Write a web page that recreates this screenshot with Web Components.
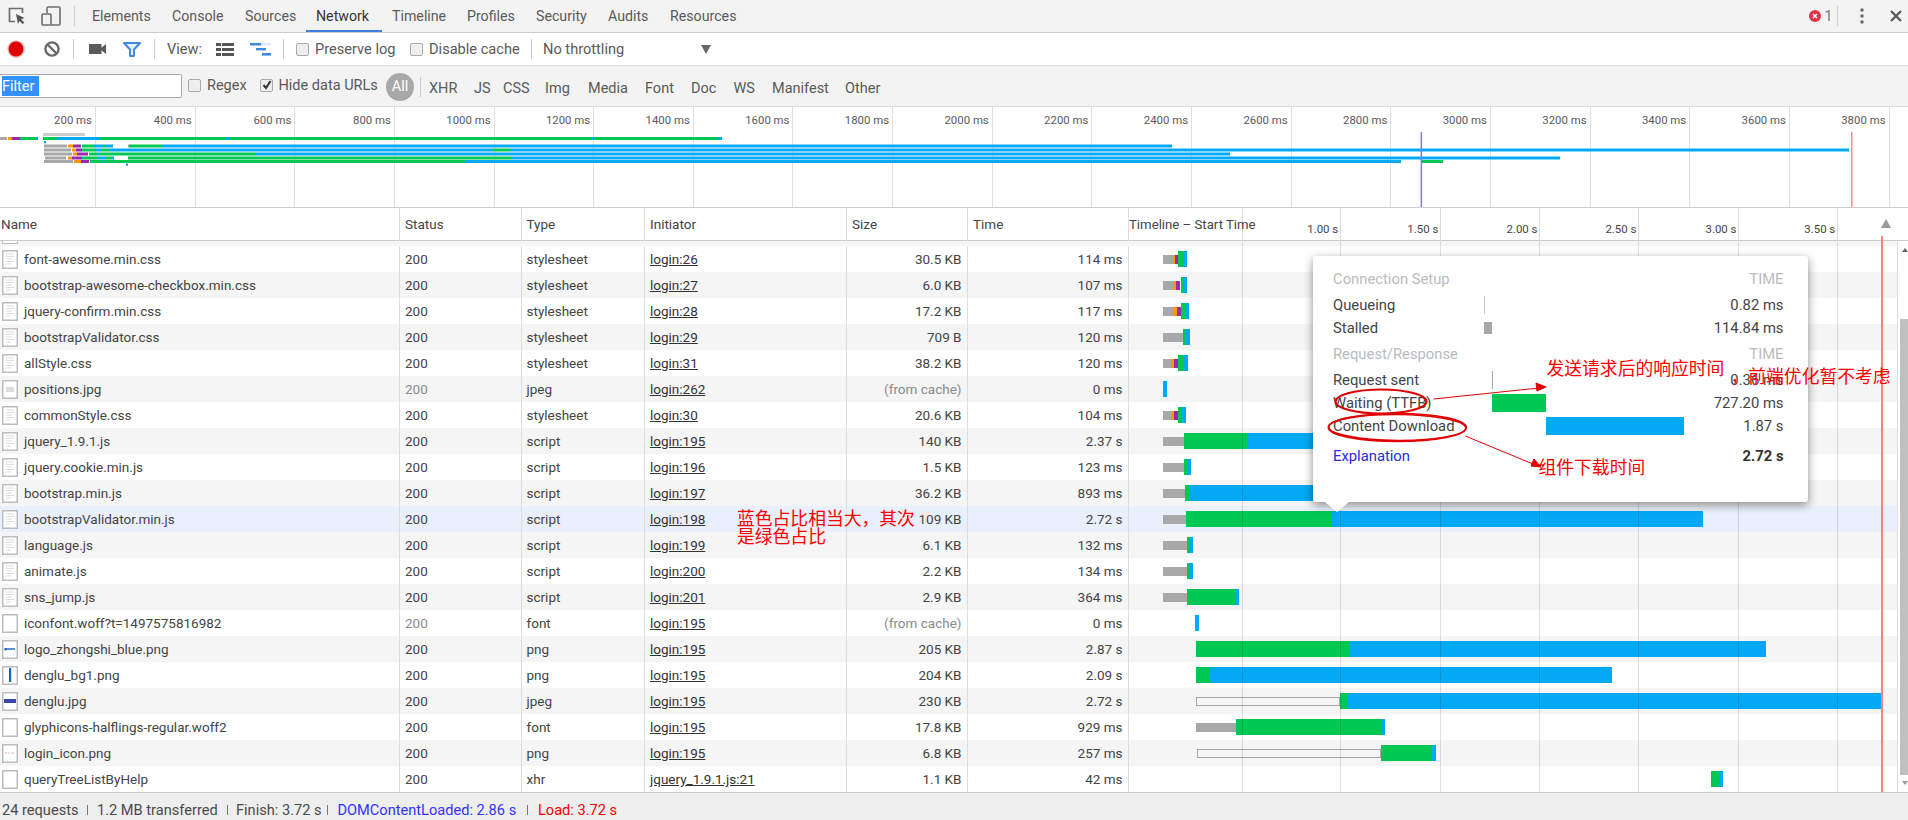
<!DOCTYPE html>
<html>
<head>
<meta charset="utf-8">
<title>Network</title>
<style>
  html, body { margin: 0; padding: 0; }
  body {
    position: relative;
    width: 1908px;
    height: 820px;
    overflow: hidden;
    background: #fff;
    color: #4a4a4a;
    font: 13.5px Roboto, "Noto Sans CJK SC", sans-serif;
  }
</style>
</head>
<body>
<dt-tabbar></dt-tabbar>
<net-toolbar></net-toolbar>
<net-filterbar></net-filterbar>
<net-overview></net-overview>
<net-table></net-table>
<net-status></net-status>
<timing-popup></timing-popup>
<red-notes></red-notes>

<script>
const GREEN = "#00c853";
const BLUE = "#03a9f4";
const GREY = "#a8a8a8";
const ORANGE = "#ff9800";
const PURPLE = "#9c27b0";

class DtTabbar extends HTMLElement {
  constructor() {
    super();
    this.attachShadow({ mode: "open" });
    const tabs = [
      ["Elements", 80], ["Console", 73], ["Sources", 71], ["Network", 76], ["Timeline", 75],
      ["Profiles", 69], ["Security", 72], ["Audits", 62], ["Resources", 90],
    ];
    this.shadowRoot.innerHTML = `
      <style>
        :host {
          display: flex;
          align-items: center;
          box-sizing: border-box;
          height: 33px;
          background: #f3f3f3;
          border-bottom: 1px solid #ccc;
          color: #5a5a5a;
          font-size: 14.2px;
        }
        svg { display: block; flex: none; }
        .sep { flex: none; width: 1px; height: 20px; background: #ccc; }
        .tab {
          box-sizing: border-box;
          flex: none;
          height: 32px;
          line-height: 33px;
          padding-left: 10px;
          white-space: nowrap;
        }
        .tab.on { color: #333; border-bottom: 2px solid #3f7fe0; }
        .right { margin-left: auto; display: flex; align-items: center; padding-right: 6px; }
        .count { margin-left: 4px; width: 11px; color: #777; }
      </style>
      <svg style="margin-left:8px" width="18" height="18" viewBox="0 0 18 18">
        <path d="M14.5 6V1.5H1.5v13H7" fill="none" stroke="#6e6e6e" stroke-width="1.7"/>
        <path d="M8 7l8.5 4-3.4 1.3 3.2 3.2-1.6 1.6-3.2-3.2L10 17z" fill="#555"/>
      </svg>
      <svg style="margin-left:15px" width="20" height="20" viewBox="0 0 20 20">
        <path d="M6 7V2a1 1 0 0 1 1-1h11a1 1 0 0 1 1 1v16a1 1 0 0 1-1 1H10" fill="none" stroke="#6e6e6e" stroke-width="1.6"/>
        <rect x="1" y="8" width="9" height="11" rx="1" fill="none" stroke="#6e6e6e" stroke-width="1.6"/>
      </svg>
      <i class="sep" style="margin-left:13px;margin-right:7px"></i>
      ${tabs.map(([t, w]) => `<div class="tab ${t === "Network" ? "on" : ""}" style="width:${w}px">${t}</div>`).join("")}
      <div class="right">
        <svg width="12" height="12" viewBox="0 0 12 12">
          <circle cx="6" cy="6" r="6" fill="#e6324b"/>
          <path d="M4 4l4 4M8 4l-4 4" stroke="#fff" stroke-width="1.5"/>
        </svg>
        <span class="count">1</span>
        <i class="sep" style="margin-left:1px"></i>
        <svg style="margin-left:22px" width="4" height="16" viewBox="0 0 4 16">
          <circle cx="2" cy="2" r="1.7" fill="#666"/><circle cx="2" cy="8" r="1.7" fill="#666"/><circle cx="2" cy="14" r="1.7" fill="#666"/>
        </svg>
        <svg style="margin-left:26.5px" width="12" height="12" viewBox="0 0 12 12">
          <path d="M1 1l10 10M11 1L1 11" stroke="#555" stroke-width="2.2"/>
        </svg>
      </div>
    `;
  }
}
customElements.define("dt-tabbar", DtTabbar);

class DtCheck extends HTMLElement {
  constructor() {
    super();
    this.attachShadow({ mode: "open" });
    this.shadowRoot.innerHTML = `
      <style>
        :host { display: inline-flex; align-items: center; flex: none; white-space: nowrap; }
        .box {
          position: relative;
          box-sizing: border-box;
          flex: none;
          width: 13px;
          height: 13px;
          margin-right: 6px;
          background: #eee;
          border: 1px solid #aaa;
          border-radius: 2px;
        }
        svg { position: absolute; left: 0; top: -1px; display: none; }
        :host([checked]) svg { display: block; }
      </style>
      <span class="box"><svg width="12" height="12" viewBox="0 0 12 12"><path d="M2.5 6l2.5 3 4.5-7" fill="none" stroke="#333" stroke-width="2"/></svg></span>
      <slot></slot>
    `;
  }
}
customElements.define("dt-check", DtCheck);

class NetToolbar extends HTMLElement {
  constructor() {
    super();
    this.attachShadow({ mode: "open" });
    this.shadowRoot.innerHTML = `
      <style>
        :host {
          display: flex;
          align-items: center;
          box-sizing: border-box;
          height: 33px;
          background: #fff;
          border-bottom: 1px solid #ddd;
          color: #5a5a5a;
          font-size: 14.6px;
        }
        svg { display: block; flex: none; }
        .sep { flex: none; width: 1px; height: 20px; background: #ccc; }
        .txt { flex: none; white-space: nowrap; }
        .arrow {
          flex: none;
          width: 0;
          height: 0;
          border: 5px solid transparent;
          border-top: 9px solid #666;
          border-bottom: 0;
        }
      </style>
      <svg style="margin-left:7px" width="18" height="18" viewBox="0 0 18 18">
        <circle cx="9" cy="9" r="8.7" fill="#f6b4b4"/><circle cx="9" cy="9" r="7.4" fill="#dc0000"/>
      </svg>
      <svg style="margin-left:19px" width="16" height="16" viewBox="0 0 16 16">
        <circle cx="8" cy="8" r="6.6" fill="none" stroke="#6a6a6a" stroke-width="2.4"/>
        <path d="M3.5 3.5l9 9" stroke="#6a6a6a" stroke-width="2.4"/>
      </svg>
      <i class="sep" style="margin-left:13px"></i>
      <svg style="margin-left:15px" width="17" height="10" viewBox="0 0 17 10">
        <rect width="12.5" height="10" fill="#5a5a5a"/><path d="M12 4l5-4v10l-5-4z" fill="#5a5a5a"/>
      </svg>
      <svg style="margin-left:17px" width="18" height="15" viewBox="0 0 18 15">
        <path d="M1 1h16l-6 6.5V14H7V7.5z" fill="#e6f0fc" stroke="#3f8ae0" stroke-width="2" stroke-linejoin="round"/>
      </svg>
      <i class="sep" style="margin-left:13px"></i>
      <span class="txt" style="margin-left:12px;width:49px">View:</span>
      <svg width="18" height="13" viewBox="0 0 18 13">
        <path d="M0 0h5v3H0zM6 0h12v3H6zM0 5h5v3H0zM6 5h12v3H6zM0 10h5v3H0zM6 10h12v3H6z" fill="#555"/>
      </svg>
      <svg style="margin-left:16px" width="21" height="13" viewBox="0 0 21 13">
        <rect width="21" height="2.4" fill="#dce8fa"/><rect width="11" height="2.4" fill="#3f8ae0"/>
        <rect x="6" y="5" width="10" height="2.4" fill="#3f8ae0"/><rect x="12" y="10" width="9" height="2.6" fill="#3f8ae0"/>
      </svg>
      <i class="sep" style="margin-left:12px"></i>
      <dt-check style="margin-left:12px;width:114px">Preserve log</dt-check>
      <dt-check style="width:121px">Disable cache</dt-check>
      <i class="sep"></i>
      <span class="txt" style="margin-left:11px;width:158px">No throttling</span>
      <i class="arrow"></i>
    `;
  }
}
customElements.define("net-toolbar", NetToolbar);

class NetFilterbar extends HTMLElement {
  constructor() {
    super();
    this.attachShadow({ mode: "open" });
    const chips = [
      ["XHR", 45], ["JS", 29], ["CSS", 42], ["Img", 43], ["Media", 57],
      ["Font", 46], ["Doc", 42.5], ["WS", 38.5], ["Manifest", 73], ["Other", 60],
    ];
    this.shadowRoot.innerHTML = `
      <style>
        :host {
          display: flex;
          align-items: center;
          box-sizing: border-box;
          height: 41px;
          padding-top: 2px;
          background: #f3f3f3;
          border-bottom: 1px solid #ddd;
          color: #5a5a5a;
          font-size: 14.5px;
        }
        .input {
          box-sizing: border-box;
          flex: none;
          display: flex;
          align-items: center;
          width: 182px;
          height: 24px;
          margin-top: -3px;
          padding-left: 2px;
          background: #fff;
          border: 1px solid #aaa;
          border-left: 0;
          border-radius: 0 2px 2px 0;
        }
        .sel { background: #3390ff; color: #fff; width: 37px; height: 20px; line-height: 21px; }
        .all {
          flex: none;
          box-sizing: border-box;
          width: 28px;
          height: 28px;
          line-height: 28px;
          text-align: center;
          color: #fff;
          background: #a8a8a8;
          border-radius: 14px;
        }
        .sep { flex: none; width: 1px; height: 20px; margin: 0 8.5px 0 5.5px; background: #ccc; }
        .chip { flex: none; white-space: nowrap; padding-top: 2px; }
      </style>
      <div class="input"><span class="sel">Filter</span></div>
      <dt-check style="margin-left:6px;margin-top:-3px;width:71.5px">Regex</dt-check>
      <dt-check checked style="margin-top:-3px;width:126.5px">Hide data URLs</dt-check>
      <span class="all">All</span>
      <i class="sep"></i>
      ${chips.map(([t, w]) => `<span class="chip" style="width:${w}px">${t}</span>`).join("")}
    `;
  }
}
customElements.define("net-filterbar", NetFilterbar);

class NetOverview extends HTMLElement {
  constructor() {
    super();
    this.attachShadow({ mode: "open" });
    let cells = "";
    for (let i = 1; i <= 19; i++) {
      const w = i === 1 ? 96 : 99.65;
      cells += `<div class="cell" style="width:${w}px">${i * 200} ms</div>`;
    }
    // y, from, to, colour
    const lanes = [
      [30, 0, 7, GREY], [30, 8, 12, ORANGE], [30, 12, 20, PURPLE], [30, 20, 36, GREEN], [30, 36, 38, BLUE],
      [30, 43, 57, GREEN], [30, 57, 100, BLUE], [30, 100, 108, GREEN], [30, 108, 225, GREEN], [30, 225, 229, BLUE],
      [30, 229, 592, GREEN], [30, 592, 594, BLUE], [30, 594, 718, GREEN], [30, 718, 722, BLUE],
      [37.5, 44, 67, GREY], [37.5, 68, 73, ORANGE], [37.5, 73, 81, PURPLE], [37.5, 82, 94, GREEN], [37.5, 94, 103, BLUE],
      [37.5, 103, 105, GREEN], [37.5, 105, 113, BLUE], [37.5, 128, 129, GREY], [37.5, 129, 162, GREEN], [37.5, 162, 1172, BLUE],
      [41.5, 44, 71, GREY], [41.5, 72, 76, ORANGE], [41.5, 76, 82, PURPLE], [41.5, 82, 96, GREEN], [41.5, 96, 102, BLUE],
      [41.5, 102, 109, GREEN], [41.5, 109, 493, BLUE], [41.5, 493, 510, GREEN], [41.5, 510, 1849, BLUE],
      [45.5, 44, 72, GREY], [45.5, 73, 77, ORANGE], [45.5, 77, 88, PURPLE], [45.5, 89, 98, GREEN], [45.5, 98, 100, BLUE],
      [45.5, 100, 256, GREEN], [45.5, 256, 1230, BLUE],
      [49.5, 45, 66, GREY], [49.5, 68, 72, ORANGE], [49.5, 72, 82, PURPLE], [49.5, 82, 98, GREEN], [49.5, 98, 106, BLUE],
      [49.5, 106, 112, GREEN], [49.5, 112, 114, BLUE], [49.5, 128, 512, GREEN], [49.5, 512, 1560, BLUE],
      [53, 44, 73, GREY], [53, 74, 81, ORANGE], [53, 81, 89, PURPLE], [53, 90, 102, GREEN], [53, 102, 104, BLUE],
      [53, 104, 465, GREEN], [53, 465, 1401, BLUE], [53, 1421.7, 1443, GREEN],
    ];
    const rects = lanes.map(([y, a, b, c]) =>
      `<rect x="${a}" y="${y}" width="${b - a}" height="3" fill="${c}"/>`).join("");
    this.shadowRoot.innerHTML = `
      <style>
        :host {
          position: relative;
          display: flex;
          box-sizing: border-box;
          height: 101px;
          background: #fff;
          border-bottom: 1px solid #ccc;
          color: #5a5a5a;
        }
        .cell {
          box-sizing: border-box;
          flex: none;
          padding: 5px 3px 0 0;
          text-align: right;
          line-height: 16px;
          font-size: 11.4px;
          white-space: nowrap;
          border-right: 1px solid #e0e0e0;
        }
        svg { position: absolute; left: 0; top: 0; }
      </style>
      ${cells}
      <svg width="1908" height="100" viewBox="0 0 1908 100">
        <rect x="43" y="26" width="42" height="3" fill="#ccc"/>
        <rect x="44" y="34" width="2" height="2.4" fill="${BLUE}"/>
        ${rects}
        <rect x="126" y="56.5" width="2" height="2.4" fill="${BLUE}"/>
        <rect x="1420.6" y="25" width="1.5" height="75" fill="#7d7de8"/>
        <rect x="1851" y="25" width="1.5" height="75" fill="#ff8c8c"/>
      </svg>
    `;
  }
}
customElements.define("net-overview", NetOverview);

function fileIcon(kind) {
  let inner = "";
  if (kind === "doc") {
    inner = `<path d="M4 4h8M4 6.5h8M4 9h6M4 11.5h8M4 14h5" stroke="#ddd" stroke-width="1"/>`;
  } else if (kind === "gray") {
    inner = `<rect x="4" y="7" width="8" height="5" fill="#ddd"/>`;
  } else if (kind === "logo") {
    inner = `<rect x="3" y="8" width="10" height="2" fill="#5b8fd0"/><rect x="2.5" y="8" width="2" height="2.5" fill="#1565c0"/>`;
  } else if (kind === "bg") {
    inner = `<rect x="7" y="2" width="2.2" height="14" fill="#1565c0"/>`;
  } else if (kind === "band") {
    inner = `<rect x="2" y="7" width="12" height="4" fill="#3949ab"/>`;
  } else if (kind === "dots") {
    inner = `<path d="M3 9h2" stroke="#cce" stroke-width="1.5"/><path d="M6 9h2" stroke="#ddc" stroke-width="1.5"/><path d="M9 9h3" stroke="#ecd" stroke-width="1.5"/>`;
  }
  return `<svg width="16" height="19" viewBox="0 0 16 19">
    <rect x=".75" y=".75" width="14.5" height="17.5" fill="#fff" stroke="#bdbdbd" stroke-width="1.5"/>${inner}</svg>`;
}

class NetRow extends HTMLElement {
  constructor() {
    super();
    this.attachShadow({ mode: "open" });
  }

  connectedCallback() {
    const d = this.data;
    const left = 1129;
    let at = left;
    const segs = d.bars.map(([kind, from, to]) => {
      const style = `margin-left:${from - at}px;width:${to - from}px`;
      at = to;
      return `<i class="${kind}" style="${style}"></i>`;
    }).join("");
    this.shadowRoot.innerHTML = `
      <style>
        :host {
          display: grid;
          grid-template-columns: 400px 121.5px 123.5px 202px 121px 161px 1fr;
          height: 26px;
          line-height: 27px;
          color: #444;
          background: #fff;
        }
        :host([stripe]) { background: #f5f5f5; }
        :host([selected]) { background: #e9f0fb; }
        .c { box-sizing: border-box; height: 26px; border-right: 1px solid #ddd; white-space: nowrap; overflow: hidden; padding-left: 5px; }
        .name { display: flex; align-items: center; padding-left: 2px; }
        .name svg { flex: none; margin-right: 6px; }
        .r { text-align: right; padding: 0 5.5px 0 0; }
        .link { text-decoration: underline; color: #333; }
        .dim { color: #8a8a8a; }
        .wf { border: 0; padding: 0; display: flex; align-items: center; overflow: visible; }
        .wf i { flex: none; box-sizing: border-box; height: 16px; }
        .wf .g { height: 9px; background: ${GREY}; }
        .wf .o { background: ${ORANGE}; height: 9px; }
        .wf .p { background: ${PURPLE}; height: 9px; }
        .wf .n { background: ${GREEN}; }
        .wf .b { background: ${BLUE}; }
        .wf .h { height: 9px; border: 1.5px solid ${GREY}; }
      </style>
      <div class="c name">${fileIcon(d.icon)}<span>${d.name}</span></div>
      <div class="c ${d.cached ? "dim" : ""}">200</div>
      <div class="c">${d.type}</div>
      <div class="c"><span class="link">${d.init}</span></div>
      <div class="c r ${d.cached ? "dim" : ""}">${d.size}</div>
      <div class="c r">${d.time}</div>
      <div class="c wf">${segs}</div>
    `;
  }
}
customElements.define("net-row", NetRow);

// bars: [kind, x from, x to] in page pixels; g grey, o orange, p purple, n green, b blue, h hollow
const X0 = 1162.9;
const ROWS = [
  { name: "font-awesome.min.css", type: "stylesheet", init: "login:26", size: "30.5 KB", time: "114 ms", icon: "doc", bars: [["g", X0, 1173.5], ["o", 1173.5, 1175], ["p", 1175, 1178], ["n", 1178, 1183], ["b", 1183, 1187]] },
  { name: "bootstrap-awesome-checkbox.min.css", type: "stylesheet", init: "login:27", size: "6.0 KB", time: "107 ms", icon: "doc", bars: [["g", X0, 1173.5], ["o", 1173.5, 1176], ["p", 1176, 1180.5], ["n", 1181, 1184], ["b", 1184, 1187]] },
  { name: "jquery-confirm.min.css", type: "stylesheet", init: "login:28", size: "17.2 KB", time: "117 ms", icon: "doc", bars: [["g", X0, 1173.5], ["o", 1173.5, 1177], ["p", 1177, 1181], ["n", 1181, 1186], ["b", 1186, 1189]] },
  { name: "bootstrapValidator.css", type: "stylesheet", init: "login:29", size: "709 B", time: "120 ms", icon: "doc", bars: [["g", X0, 1183], ["n", 1183, 1186], ["b", 1186, 1190]] },
  { name: "allStyle.css", type: "stylesheet", init: "login:31", size: "38.2 KB", time: "120 ms", icon: "doc", bars: [["g", X0, 1171.5], ["o", 1171.5, 1174], ["p", 1174, 1178], ["n", 1178, 1184], ["b", 1184, 1188]] },
  { name: "positions.jpg", type: "jpeg", init: "login:262", size: "(from cache)", time: "0 ms", icon: "gray", cached: true, bars: [["b", X0, 1167]] },
  { name: "commonStyle.css", type: "stylesheet", init: "login:30", size: "20.6 KB", time: "104 ms", icon: "doc", bars: [["g", X0, 1172], ["o", 1172, 1174], ["p", 1174, 1178], ["n", 1178, 1182], ["b", 1182, 1186]] },
  { name: "jquery_1.9.1.js", type: "script", init: "login:195", size: "140 KB", time: "2.37 s", icon: "doc", bars: [["g", X0, 1184], ["n", 1184, 1247], ["b", 1247, 1640]] },
  { name: "jquery.cookie.min.js", type: "script", init: "login:196", size: "1.5 KB", time: "123 ms", icon: "doc", bars: [["g", X0, 1184], ["n", 1184, 1187], ["b", 1187, 1191]] },
  { name: "bootstrap.min.js", type: "script", init: "login:197", size: "36.2 KB", time: "893 ms", icon: "doc", bars: [["g", X0, 1185], ["n", 1185, 1189], ["b", 1189, 1340]] },
  { name: "bootstrapValidator.min.js", type: "script", init: "login:198", size: "109 KB", time: "2.72 s", icon: "doc", selected: true, bars: [["g", X0, 1186], ["n", 1186, 1330.6], ["b", 1330.6, 1703]] },
  { name: "language.js", type: "script", init: "login:199", size: "6.1 KB", time: "132 ms", icon: "doc", bars: [["g", X0, 1187], ["n", 1187, 1189], ["b", 1189, 1193]] },
  { name: "animate.js", type: "script", init: "login:200", size: "2.2 KB", time: "134 ms", icon: "doc", bars: [["g", X0, 1187], ["n", 1187, 1189], ["b", 1189, 1193]] },
  { name: "sns_jump.js", type: "script", init: "login:201", size: "2.9 KB", time: "364 ms", icon: "doc", bars: [["g", X0, 1187], ["n", 1187, 1235], ["b", 1235, 1239]] },
  { name: "iconfont.woff?t=1497575816982", type: "font", init: "login:195", size: "(from cache)", time: "0 ms", icon: "plain", cached: true, bars: [["b", 1195, 1199]] },
  { name: "logo_zhongshi_blue.png", type: "png", init: "login:195", size: "205 KB", time: "2.87 s", icon: "logo", bars: [["n", 1196, 1348.5], ["b", 1348.5, 1766]] },
  { name: "denglu_bg1.png", type: "png", init: "login:195", size: "204 KB", time: "2.09 s", icon: "bg", bars: [["n", 1196, 1209.5], ["b", 1209.5, 1612]] },
  { name: "denglu.jpg", type: "jpeg", init: "login:195", size: "230 KB", time: "2.72 s", icon: "band", bars: [["h", 1196, 1340.4], ["n", 1340.4, 1347.7], ["b", 1347.7, 1881]] },
  { name: "glyphicons-halflings-regular.woff2", type: "font", init: "login:195", size: "17.8 KB", time: "929 ms", icon: "plain", bars: [["g", 1196, 1236], ["n", 1236, 1381], ["b", 1381, 1385]] },
  { name: "login_icon.png", type: "png", init: "login:195", size: "6.8 KB", time: "257 ms", icon: "dots", bars: [["h", 1197, 1381], ["n", 1381, 1432], ["b", 1432, 1436]] },
  { name: "queryTreeListByHelp", type: "xhr", init: "jquery_1.9.1.js:21", size: "1.1 KB", time: "42 ms", icon: "plain", bars: [["n", 1711, 1718.7], ["b", 1718.7, 1722.8]] },
];

class NetTable extends HTMLElement {
  constructor() {
    super();
    this.attachShadow({ mode: "open" });
    const ticks = [[98.7, "1.00 s"], [100.1, "1.50 s"], [99.2, "2.00 s"], [98.9, "2.50 s"], [100.1, "3.00 s"], [98.8, "3.50 s"]];
    this.shadowRoot.innerHTML = `
      <style>
        :host { position: relative; display: block; height: 584px; background: #fff; color: #444; }
        .head {
          display: grid;
          grid-template-columns: 400px 121.5px 123.5px 202px 121px 161px 1fr;
          box-sizing: border-box;
          height: 33px;
          border-bottom: 1px solid #ccc;
        }
        .head > div { box-sizing: border-box; line-height: 32px; padding-left: 5px; border-right: 1px solid #ddd; white-space: nowrap; }
        .head > .tl { display: flex; padding: 0; border: 0; }
        .title { flex: none; box-sizing: border-box; width: 113.5px; font-size: 13.2px; line-height: 34px; border-right: 1px solid #ddd; }
        .tick {
          flex: none;
          box-sizing: border-box;
          padding: 5px 2px 0 0;
          text-align: right;
          font-size: 11.4px;
          line-height: 32px;
          border-right: 1px solid #ddd;
        }
        .sort {
          flex: none;
          width: 0;
          height: 0;
          margin: 11px 0 0 42.7px;
          border: 5px solid transparent;
          border-bottom: 9px solid #999;
          border-top: 0;
        }
        .body { position: relative; display: flex; height: 551px; }
        .rows { flex: 1; min-width: 0; border-right: 1px solid #ddd; }
        .stub { position: relative; height: 5px; background: #f5f5f5; overflow: hidden; }
        .stub i { position: absolute; left: 2px; top: -14px; width: 16px; height: 17px; box-sizing: border-box; border: 1.5px solid #bdbdbd; background: #fff; }
        .bar { flex: none; display: flex; flex-direction: column; align-items: flex-end; width: 10px; }
        .up, .down { width: 0; height: 0; border: 3px solid transparent; }
        .up { margin-top: 7px; border-bottom: 4px solid #666; border-top: 0; }
        .down { margin-top: 6px; border-top: 4px solid #999; border-bottom: 0; }
        .thumb { width: 8px; height: 456px; margin-top: 67px; background: #c0c0c0; }
        .lines { position: absolute; left: 1129px; top: 0; bottom: 0; display: flex; pointer-events: none; }
        .lines i { flex: none; box-sizing: border-box; border-right: 1px solid rgba(0, 0, 0, .12); }
        .load { position: absolute; left: 1881px; top: 28px; width: 2px; height: 556px; background: #ff8080; }
      </style>
      <div class="head">
        <div style="padding-left:1px">Name</div><div>Status</div><div>Type</div><div>Initiator</div><div>Size</div><div>Time</div>
        <div class="tl">
          <div class="title">Timeline – Start Time</div>
          ${ticks.map(([w, t]) => `<div class="tick" style="width:${w}px">${t}</div>`).join("")}
          <i class="sort"></i>
        </div>
      </div>
      <div class="body">
        <div class="rows"><div class="stub"><i></i></div></div>
        <div class="bar"><i class="up"></i><i class="thumb"></i><i class="down"></i></div>
        <div class="lines"><i style="width:113.5px"></i>${ticks.map(([w]) => `<i style="width:${w}px"></i>`).join("")}</div>
      </div>
      <i class="load"></i>
    `;
    const rows = this.shadowRoot.querySelector(".rows");
    ROWS.forEach((data, i) => {
      const row = document.createElement("net-row");
      row.data = data;
      if (i % 2 === 1) row.setAttribute("stripe", "");
      if (data.selected) row.setAttribute("selected", "");
      rows.appendChild(row);
    });
  }
}
customElements.define("net-table", NetTable);

class NetStatus extends HTMLElement {
  constructor() {
    super();
    this.attachShadow({ mode: "open" });
    this.shadowRoot.innerHTML = `
      <style>
        :host {
          display: flex;
          align-items: center;
          box-sizing: border-box;
          height: 28px;
          padding: 7px 0 0 2px;
          background: #eee;
          border-top: 1px solid #ccc;
          color: #4a4a4a;
          font-size: 14.6px;
          white-space: nowrap;
        }
        span { flex: none; }
        i { flex: none; width: 1px; height: 10px; background: #777; }
      </style>
      <span style="width:85px">24 requests</span><i></i>
      <span style="margin-left:9px;width:129.5px">1.2 MB transferred</span><i></i>
      <span style="margin-left:8.5px;width:91px">Finish: 3.72 s</span><i></i>
      <span style="margin-left:9.5px;width:189.5px;color:#3333ff">DOMContentLoaded: 2.86 s</span><i></i>
      <span style="margin-left:10px;color:#f00">Load: 3.72 s</span>
    `;
  }
}
customElements.define("net-status", NetStatus);

class TimingPopup extends HTMLElement {
  constructor() {
    super();
    this.attachShadow({ mode: "open" });
    const row = (label, ml, w, h, color, value) => `
      <div class="row">
        <span>${label}</span>
        <span class="track"><i style="margin-left:${ml}px;width:${w}px;height:${h}px;background:${color}"></i></span>
        <span>${value}</span>
      </div>`;
    this.shadowRoot.innerHTML = `
      <style>
        :host {
          position: absolute;
          left: 1313px;
          top: 256px;
          box-sizing: border-box;
          width: 495px;
          height: 246px;
          padding: 11.5px 24.5px 0 20px;
          background: #fff;
          border-radius: 3px;
          box-shadow: 0 3px 10px rgba(0, 0, 0, .45);
          color: #444;
          font-size: 14.8px;
        }
        :host::after {
          content: "";
          position: absolute;
          left: 12px;
          bottom: -10px;
          border: 12px solid transparent;
          border-top: 10px solid #fff;
          border-bottom: 0;
        }
        .row { display: grid; grid-template-columns: 151px 1fr auto; align-items: center; height: 23px; white-space: nowrap; }
        .track { display: flex; align-items: center; }
        .track i { flex: none; display: block; }
        .cap { color: #bbb; }
        .cap.next { margin-top: 3px; }
        .first { margin-top: 3px; }
        .foot { margin-top: 7px; }
        .foot a { color: #2a2ae0; }
        .foot b { color: #333; }
      </style>
      <div class="row cap"><span>Connection Setup</span><span></span><span>TIME</span></div>
      <div class="first">${row("Queueing", 0, 1, 18, "#ccc", "0.82 ms")}</div>
      ${row("Stalled", 0, 8, 12, GREY, "114.84 ms")}
      <div class="row cap next"><span>Request/Response</span><span></span><span>TIME</span></div>
      <div class="first">${row("Request sent", 7.5, 1, 18, "#aaa", "0.36 ms")}</div>
      ${row("Waiting (TTFB)", 7.5, 54, 18, GREEN, "727.20 ms")}
      ${row("Content Download", 61.5, 138.5, 18, BLUE, "1.87 s")}
      <div class="row foot"><a>Explanation</a><span></span><b>2.72 s</b></div>
    `;
  }
}
customElements.define("timing-popup", TimingPopup);

class RedNotes extends HTMLElement {
  constructor() {
    super();
    this.attachShadow({ mode: "open" });
    const notes = [
      [1546.5, 358, "发送请求后的响应时间"],
      [1730.5, 366, "，前端优化暂不考虑"],
      [1538.5, 457, "组件下载时间"],
      [737, 508, "蓝色占比相当大，其次"],
      [737, 526, "是绿色占比"],
    ];
    this.shadowRoot.innerHTML = `
      <style>
        :host { position: absolute; left: 0; top: 0; width: 1908px; height: 820px; pointer-events: none; }
        span {
          position: absolute;
          color: #f00;
          font: 17.8px/18px "Noto Sans CJK SC", sans-serif;
          white-space: nowrap;
        }
        svg { position: absolute; left: 0; top: 0; }
      </style>
      ${notes.map(([x, y, t]) => `<span style="left:${x}px;top:${y}px">${t}</span>`).join("")}
      <svg width="1908" height="820" viewBox="0 0 1908 820" fill="none" stroke="#e00000">
        <ellipse cx="1381" cy="401.5" rx="45.5" ry="12" stroke-width="2.2"/>
        <ellipse cx="1397.3" cy="427.5" rx="69" ry="14" stroke-width="1.6"/>
        <ellipse cx="1397.3" cy="427.5" rx="68.5" ry="13" stroke-width="1.6" transform="rotate(.5 1397.3 427.5)"/>
        <path d="M1433.5 399L1539 388" stroke-width="1"/>
        <path d="M1546 387l-10-4 1 8z" fill="#e00000"/>
        <path d="M1465.3 436L1533 464" stroke-width="1"/>
        <path d="M1541 467l-7-8-3 7z" fill="#e00000"/>
      </svg>
    `;
  }
}
customElements.define("red-notes", RedNotes);
</script>
</body>
</html>
